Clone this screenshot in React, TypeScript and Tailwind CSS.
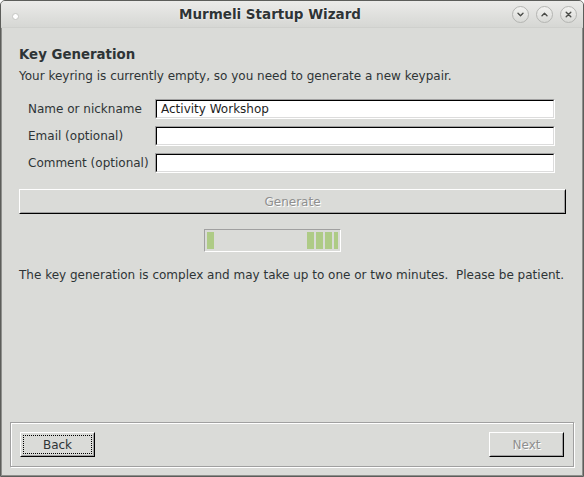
import React from "react";

const font = { fontFamily: '"DejaVu Sans", "Liberation Sans", sans-serif' };

function TitleButton({ kind }: { kind: "min" | "max" | "close" }) {
  return (
    <div className="flex h-[17px] w-[17px] items-center justify-center rounded-full border border-[#b4b5b2] bg-gradient-to-b from-[#f2f2f0] to-[#d9dad7]">
      <svg width="9" height="9" viewBox="0 0 9 9" fill="none" stroke="#4a4c48" strokeWidth="1.4" strokeLinecap="round" strokeLinejoin="round">
        {kind === "min" && <path d="M2 3.2 L4.5 5.7 L7 3.2" />}
        {kind === "max" && <path d="M2 5.8 L4.5 3.3 L7 5.8" />}
        {kind === "close" && <path d="M2.2 2.2 L6.8 6.8 M6.8 2.2 L2.2 6.8" />}
      </svg>
    </div>
  );
}

function Field({ value = "" }: { value?: string }) {
  return (
    <div className="h-[20px] border border-t-[#a0a0a0] border-l-[#a0a0a0] border-b-white border-r-white">
      <div className="flex h-full items-center border border-t-black border-l-black border-b-[#dcdcdc] border-r-[#dcdcdc] bg-white pl-[4px] text-[12px] text-[#1e1e1e]">
        {value}
      </div>
    </div>
  );
}

function RaisedButton({
  children,
  disabled = false,
  focused = false,
  className = "",
}: {
  children: React.ReactNode;
  disabled?: boolean;
  focused?: boolean;
  className?: string;
}) {
  return (
    <div
      className={`h-[25px] border border-t-white border-l-white border-b-black border-r-black ${className}`}
    >
      <div className="flex h-full items-center justify-center border border-t-transparent border-l-transparent border-b-[#a0a0a0] border-r-[#a0a0a0] p-[1px]">
        <div
          className={`flex h-full w-full items-center justify-center text-[12px] ${
            focused ? "border border-dotted border-black" : ""
          } ${disabled ? "text-[#8f8f8f] [text-shadow:1px_1px_0_#ffffff]" : "text-[#2e3436]"}`}
        >
          {children}
        </div>
      </div>
    </div>
  );
}

export default function App() {
  return (
    <div
      style={font}
      className="flex h-[477px] w-[584px] flex-col overflow-hidden rounded-t-[5px] border border-[#5c5d5a] bg-[#dadbd8] text-[#2e3436] shadow-[inset_1px_0_0_#8e8f8c,inset_-1px_0_0_#8e8f8c,inset_0_-1px_0_#8e8f8c]"
    >
      {/* title bar */}
      <div className="flex h-[27px] shrink-0 items-center border-b border-[#cfd0cd] bg-gradient-to-b from-[#ebebe9] to-[#d6d7d4]">
        <div className="flex w-[28px] justify-center pt-[5px]">
          <div className="h-[7px] w-[7px] rounded-full border border-[#c4c5c2] bg-white" />
        </div>
        <div className="flex-1 text-center text-[13.5px] font-bold text-[#2e3436] [text-shadow:0_0_2px_#ffffff]">
          Murmeli Startup Wizard
        </div>
        <div className="flex w-[72px] items-center justify-end gap-[7px] pr-[6px]">
          <TitleButton kind="min" />
          <TitleButton kind="max" />
          <TitleButton kind="close" />
        </div>
      </div>

      {/* content */}
      <div className="flex flex-col pl-[18px] pr-[17px] pt-[19px]">
        <div className="text-[13.33px] leading-[16px] font-bold">Key Generation</div>
        <div className="mt-[6px] text-[12px] leading-[15px]">
          Your keyring is currently empty, so you need to generate a new keypair.
        </div>

        <div className="mt-[15px] grid grid-cols-[127px_1fr] items-center gap-y-[7px] pl-[9px] pr-[11px] text-[12px]">
          <div>Name or nickname</div>
          <Field value="Activity Workshop" />
          <div>Email (optional)</div>
          <Field />
          <div>Comment (optional)</div>
          <Field />
        </div>

        <RaisedButton disabled className="mt-[16px]">
          Generate
        </RaisedButton>

        <div className="mt-[15px] ml-[185px] flex h-[23px] w-[137px] justify-between border border-t-[#a0a0a0] border-l-[#a0a0a0] border-b-white border-r-white p-[2px]">
          <div className="w-[7px] bg-[#aecb86]" />
          <div className="flex gap-[2px]">
            <div className="w-[7px] bg-[#aecb86]" />
            <div className="w-[7px] bg-[#aecb86]" />
            <div className="w-[7px] bg-[#aecb86]" />
            <div className="w-[4px] bg-[#aecb86]" />
          </div>
        </div>

        <div className="mt-[16px] text-[12px] leading-[15px] whitespace-pre">
          The key generation is complex and may take up to one or two minutes.  Please be patient.
        </div>
      </div>

      <div className="flex-1" />

      {/* bottom button frame */}
      <div className="mx-[9px] mb-[9px] flex justify-between border border-[#a0a0a0] p-[9px] shadow-[1px_1px_0_#ffffff,inset_1px_1px_0_#ffffff]">
        <RaisedButton focused className="w-[75px]">
          Back
        </RaisedButton>
        <RaisedButton disabled className="w-[75px]">
          Next
        </RaisedButton>
      </div>
    </div>
  );
}
